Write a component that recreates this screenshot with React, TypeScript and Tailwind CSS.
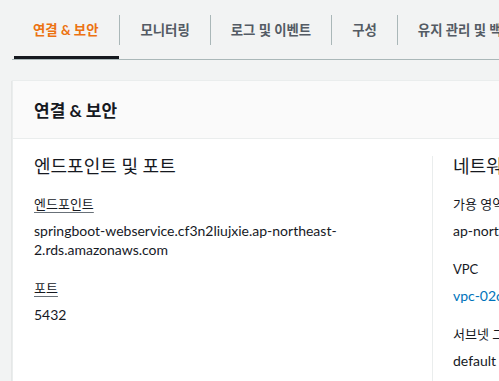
import * as React from "react";

const tabs = ["연결 & 보안", "모니터링", "로그 및 이벤트", "구성", "유지 관리 및 백업", "태그"];

function Field({ label, underline, children }: { label: string; underline?: boolean; children: React.ReactNode }) {
    return (
        <div className="flex flex-col gap-[7px] mb-[20px]">
            <span
                className={
                    "text-[13px] leading-[19px] text-[#16191f] " +
                    (underline ? "underline decoration-[#687078] underline-offset-[3px]" : "")
                }
            >
                {label}
            </span>
            <div className="text-[14px] leading-[19px] text-[#16191f]">{children}</div>
        </div>
    );
}

export default function App() {
    return (
        <div
            className="w-[499px] h-[381px] overflow-hidden bg-[#f2f3f3]"
            style={{ fontFamily: "Lato, 'Noto Sans CJK KR', sans-serif" }}
        >
            {/* Tabs */}
            <div className="w-[900px] ml-[12px] pt-[15px] border-b border-[#aab7b8] flex flex-row whitespace-nowrap">
                {tabs.map((t, i) => (
                    <div key={t} className="flex flex-col">
                        <div className="flex flex-row items-center h-[30px]">
                            {i > 0 && <div className="w-px h-[30px] bg-[#aab7b8]" />}
                            <span
                                className={
                                    "text-[13.4px] font-bold " +
                                    (i === 0 ? "pl-[21px] pr-[21px] text-[#ec7211]" : "px-[20px] text-[#545b64]")
                                }
                            >
                                {t}
                            </span>
                        </div>
                        <div className={"h-[3px] mt-[11px] ml-[2px] " + (i === 0 ? "bg-[#16191f]" : "bg-transparent")} />
                    </div>
                ))}
            </div>

            {/* Panel */}
            <div className="ml-[12px] mt-[20px] w-[900px] bg-white border border-[#eaeded] shadow-[0_1px_1px_0_rgba(0,28,36,0.3)]">
                <div className="h-[58px] bg-[#fafafa] border-b border-[#eaeded] flex items-center px-[21px] pt-[3px]">
                    <h2 className="text-[17px] font-bold text-[#16191f]">연결 &amp; 보안</h2>
                </div>
                <div className="flex flex-row pt-[17px]">
                    <div className="w-[420px] pl-[21px] pr-[20px] border-r border-[#eaeded]">
                        <h3 className="text-[18px] leading-[22px] text-[#16191f] -mt-[1px] mb-[18px]">엔드포인트 및 포트</h3>
                        <Field label="엔드포인트" underline>
                            springboot-webservice.cf3n2liujxie.ap-northeast-2.rds.amazonaws.com
                        </Field>
                        <Field label="포트" underline>5432</Field>
                        <div className="h-[40px]" />
                    </div>
                    <div className="flex-1 pl-[20px] pr-[20px] whitespace-nowrap">
                        <h3 className="text-[18px] leading-[22px] text-[#16191f] -mt-[1px] mb-[18px]">네트워킹</h3>
                        <Field label="가용 영역">ap-northeast-2a</Field>
                        <Field label="VPC">
                            <span className="text-[#0073bb]">vpc-02c4b0e1</span>
                        </Field>
                        <Field label="서브넷 그룹">default</Field>
                    </div>
                </div>
            </div>
        </div>
    );
}
